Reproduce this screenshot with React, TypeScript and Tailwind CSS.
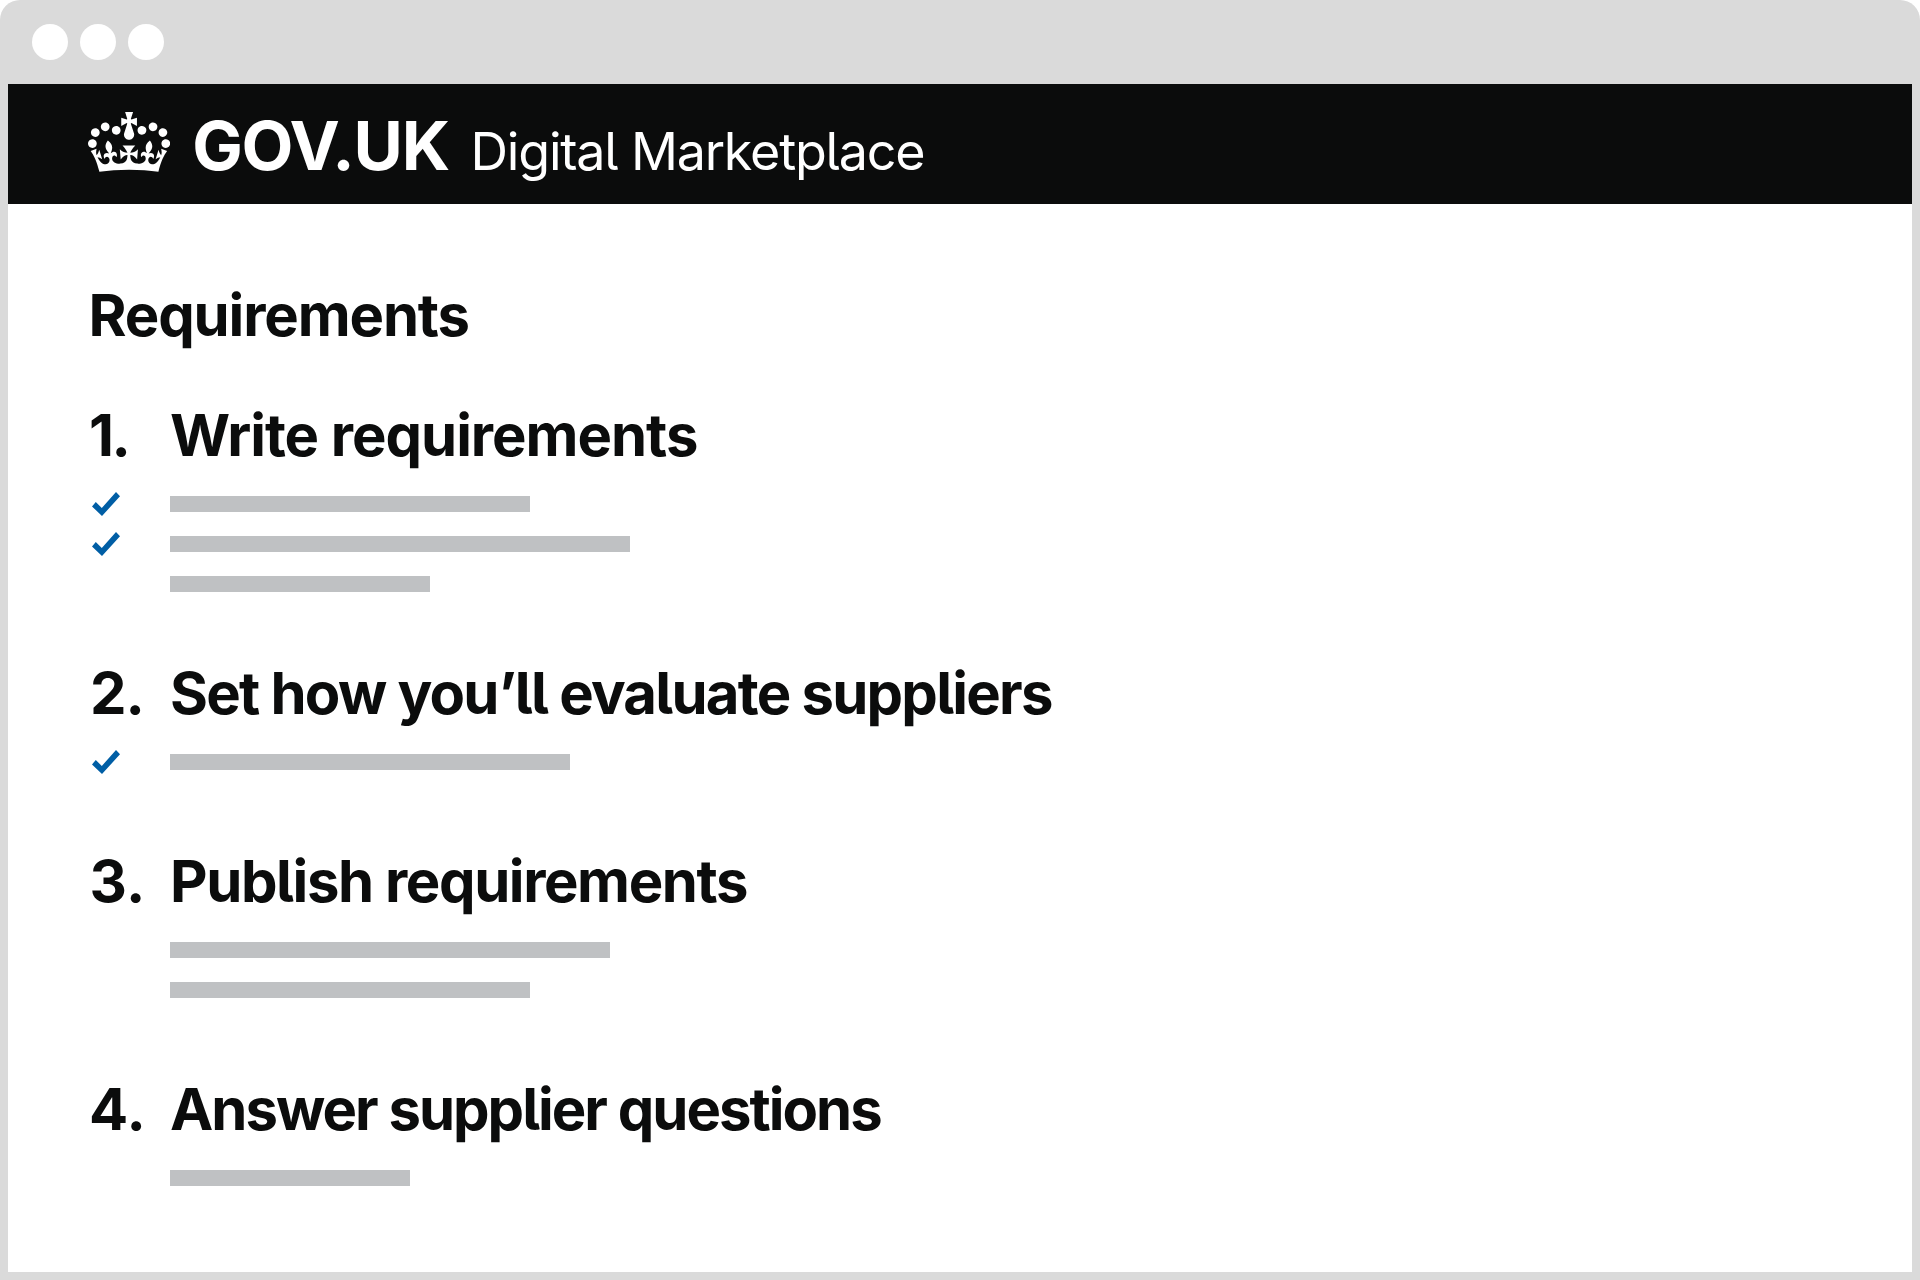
type Line = { width: string; done?: boolean };
type Section = { number: string; numberSpacing: string; title: string; titleSpacing: string; margin: string; lines: Line[] };

const sections: Section[] = [
  {
    number: '1.',
    numberSpacing: 'pl-px tracking-[-2.5px]',
    title: 'Write requirements',
    titleSpacing: 'tracking-[-1.02px]',
    margin: 'mt-[60px]',
    lines: [
      { width: 'w-[360px]', done: true },
      { width: 'w-[460px]', done: true },
      { width: 'w-[260px]' },
    ],
  },
  {
    number: '2.',
    numberSpacing: 'pl-0.5 tracking-[-1px]',
    title: 'Set how you’ll evaluate suppliers',
    titleSpacing: 'tracking-[-1.75px]',
    margin: 'mt-[67px]',
    lines: [{ width: 'w-[400px]', done: true }],
  },
  {
    number: '3.',
    numberSpacing: 'pl-[1.5px] tracking-[0.3px]',
    title: 'Publish requirements',
    titleSpacing: 'tracking-[-1.4px]',
    margin: 'mt-[77px]',
    lines: [{ width: 'w-[440px]' }, { width: 'w-[360px]' }],
  },
  {
    number: '4.',
    numberSpacing: 'pl-px tracking-[0.3px]',
    title: 'Answer supplier questions',
    titleSpacing: 'tracking-[-1.99px]',
    margin: 'mt-[77px]',
    lines: [{ width: 'w-[240px]' }],
  },
];

function Crown() {
  return (
    <svg className="mt-[28px] h-[60.4px] w-[82.2px] shrink-0" viewBox="0 0 132 97" fill="currentColor" aria-hidden="true">
      <path
        fillRule="evenodd"
        d="M25 30.2c3.5 1.5 7.7-.2 9.1-3.7 1.5-3.6-.2-7.8-3.9-9.2-3.6-1.4-7.6.3-9.1 3.9-1.4 3.5.3 7.5 3.9 9zM9 39.5c3.6 1.5 7.8-.2 9.2-3.7 1.5-3.6-.2-7.8-3.9-9.1-3.6-1.5-7.6.2-9.1 3.8-1.4 3.5.3 7.5 3.8 9zM4.4 57.2c3.5 1.5 7.7-.2 9.1-3.8 1.5-3.6-.2-7.7-3.9-9.1-3.5-1.5-7.6.3-9.1 3.8-1.4 3.5.3 7.6 3.9 9.1zm38.3-21.4c3.5 1.5 7.7-.2 9.1-3.8 1.5-3.6-.2-7.7-3.9-9.1-3.6-1.5-7.6.3-9.1 3.8-1.3 3.6.4 7.7 3.9 9.1zm64.4-5.6c-3.6 1.5-7.8-.2-9.1-3.7-1.5-3.6.2-7.8 3.8-9.2 3.6-1.4 7.7.3 9.2 3.9 1.3 3.5-.4 7.5-3.9 9zm15.9 9.3c-3.6 1.5-7.7-.2-9.1-3.7-1.5-3.6.2-7.8 3.7-9.1 3.6-1.5 7.7.2 9.2 3.8 1.5 3.5-.3 7.5-3.8 9zm4.7 17.7c-3.6 1.5-7.8-.2-9.2-3.8-1.5-3.6.2-7.7 3.9-9.1 3.6-1.5 7.7.3 9.2 3.8 1.3 3.5-.4 7.6-3.9 9.1zM89.3 35.8c-3.6 1.5-7.8-.2-9.2-3.8-1.4-3.6.2-7.7 3.9-9.1 3.6-1.5 7.7.3 9.2 3.8 1.4 3.6-.3 7.7-3.9 9.1zM69.7 17.7l8.9 4.7V9.3l-8.9 2.8c-.2-.3-.5-.6-.9-.9L72.4 0H59.6l3.5 11.2c-.3.3-.6.5-.9.9l-8.8-2.8v13.1l8.8-4.7c.3.3.6.7.9.9l-5 15.4v.1c-.2.8-.4 1.6-.4 2.4 0 4.1 3.1 7.5 7 8.1h.2c.3 0 .7.1 1 .1.4 0 .7 0 1-.1h.2c4-.6 7.1-4.1 7.1-8.1 0-.8-.1-1.7-.4-2.4V34l-5.1-15.4c.4-.2.7-.6 1-.9zM66 92.8c16.9 0 32.8 1.1 47.1 3.2 4-16.9 8.9-26.7 14-33.5l-9.6-3.4c1 4.9 1.1 7.2 0 10.2-1.5-1.4-3-4.3-4.2-8.7L108.6 76c2.8-2 5-3.2 7.5-3.3-4.4 9.4-10 11.9-13.6 11.2-4.3-.8-6.3-4.6-5.6-7.9 1-4.7 5.7-5.9 8-.5 4.3-8.7-3-11.4-7.6-8.8 7.1-7.2 7.9-13.5 2.1-21.1-8 6.1-8.1 12.3-4.5 20.8-4.7-5.4-12.1-2.5-9.5 6.2 3.4-5.2 7.9-2 7.2 3.1-.6 4.3-6.4 7.8-13.5 7.2-10.3-.9-10.9-8-11.2-13.8 2.5-.5 7.1 1.8 11 7.3L80.2 60c-4.1 4.4-8 5.3-12.3 5.4 1.4-4.4 8-11.6 8-11.6H55.5s6.4 7.2 7.9 11.6c-4.2-.1-8-1-12.3-5.4l1.4 16.4c3.9-5.5 8.5-7.7 10.9-7.3-.3 5.8-.9 12.8-11.1 13.8-7.2.6-12.9-2.9-13.5-7.2-.7-5 3.8-8.3 7.1-3.1 2.7-8.7-4.6-11.6-9.4-6.2 3.7-8.5 3.6-14.7-4.6-20.8-5.8 7.6-5 13.9 2.2 21.1-4.7-2.6-11.9.1-7.7 8.8 2.3-5.5 7.1-4.2 8.1.5.7 3.3-1.3 7.1-5.7 7.9-3.5.7-9-1.8-13.5-11.2 2.5.1 4.7 1.3 7.5 3.3l-4.7-15.4c-1.2 4.4-2.7 7.2-4.3 8.7-1.1-3-.9-5.3 0-10.2l-9.5 3.4c5 6.9 9.9 16.7 14 33.5 14.8-2.1 30.8-3.2 47.7-3.2z"
      />
    </svg>
  );
}

function Check() {
  return (
    <svg className="h-6 w-7" viewBox="0 0 28 24" fill="#005ea5" aria-hidden="true">
      <path d="M0 14.4 3.8 10l6 6L24 0l4 4.3L10 24z" />
    </svg>
  );
}

export default function App() {
  return (
    <div className="h-[1280px] w-[1920px] bg-white font-['Inter',sans-serif] text-[#0b0c0c] [font-feature-settings:'cv05'_1]">
      <div className="flex h-full flex-col rounded-t-[20px] bg-[#dadada] px-2 pb-2">
        <div className="flex h-[84px] shrink-0 gap-3 pt-6 pl-6">
          <span className="size-9 rounded-full bg-white" />
          <span className="size-9 rounded-full bg-white" />
          <span className="size-9 rounded-full bg-white" />
        </div>
        <header className="flex h-[120px] shrink-0 bg-[#0b0c0c] pl-[80px] text-white">
          <Crown />
          <div className="flex items-baseline whitespace-nowrap pt-[27px] pl-[22px]">
            <span className="text-[67.4px] leading-[70px] font-bold tracking-[-1.19px]">GOV.UK</span>
            <span className="ml-[21.5px] text-[52px] leading-[60px] tracking-[-1.2px]">Digital Marketplace</span>
          </div>
        </header>
        <main className="flex-1 bg-white pt-[81px] pl-[80px] text-[58px] leading-[60px] font-bold">
          <h1 className="pl-[0.5px] tracking-[-1.13px]">Requirements</h1>
          {sections.map((section) => (
            <section key={section.number} className={section.margin}>
              <h2 className="flex whitespace-nowrap">
                <span className={`w-[82px] ${section.numberSpacing}`}>{section.number}</span>
                <span className={section.titleSpacing}>{section.title}</span>
              </h2>
              <div className="mt-[27px] flex flex-col gap-4">
                {section.lines.map((line, i) => (
                  <div key={i} className="flex h-6 items-center">
                    <div className="w-[82px] pl-1">{line.done && <Check />}</div>
                    <div className={`h-4 bg-[#bfc1c3] ${line.width}`} />
                  </div>
                ))}
              </div>
            </section>
          ))}
        </main>
      </div>
    </div>
  );
}
